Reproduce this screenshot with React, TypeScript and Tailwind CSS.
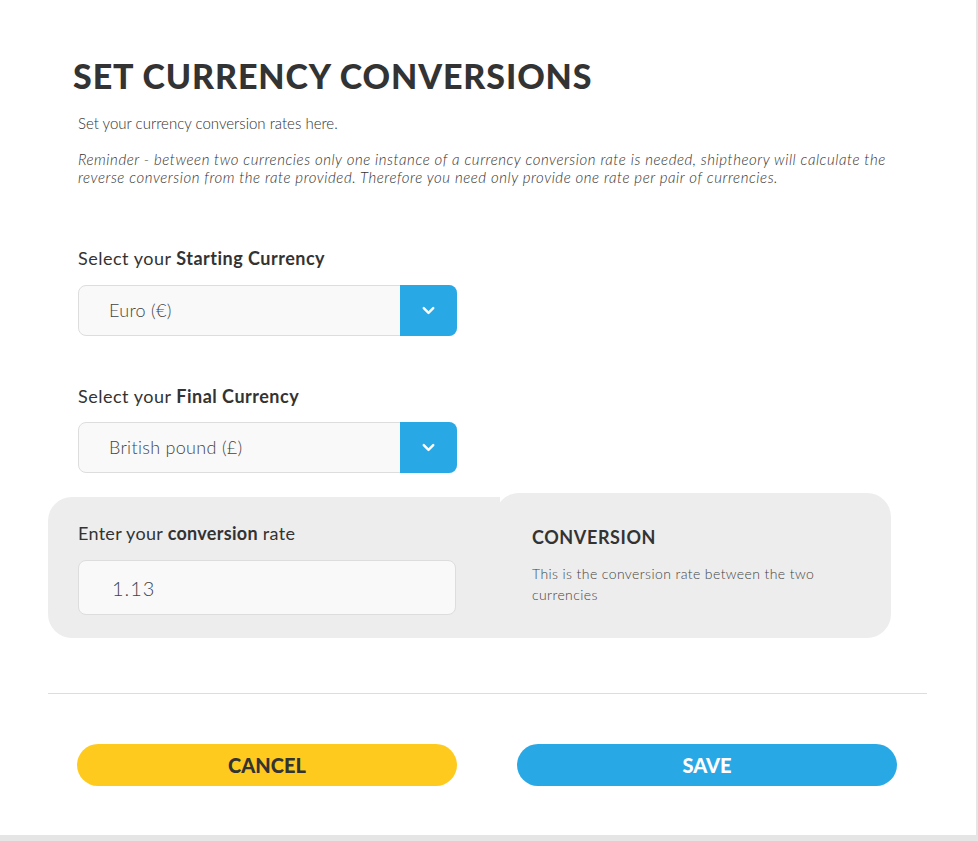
import { ChevronDown } from 'lucide-react';

function Select({ value }: { value: string }) {
  return (
    <div className="flex h-[51px] w-[379px] rounded-[8px] border border-[#dddddd] bg-[#f9f9f9]">
      <div className="flex flex-1 items-center pl-[30px] text-[18px] font-light tracking-[0.3px] text-[#444444]">{value}</div>
      <div className="-my-px -mr-px flex w-[57px] items-center justify-center rounded-r-[8px] bg-[#29a8e6]">
        <ChevronDown size={19} strokeWidth={3} color="#ffffff" />
      </div>
    </div>
  );
}

export default function App() {
  return (
    <div className="min-h-screen bg-[#e5e5e5] font-['Lato',sans-serif] text-[#333333]">
      <div className="h-[835px] w-[976px] bg-white px-[48px] pt-[56px]">
        <h1 className="ml-[25px] text-[34px] leading-[40px] font-black tracking-[0.9px]">SET CURRENCY CONVERSIONS</h1>
        <div className="pl-[30px]">
          <p className="mt-[17px] text-[15px] leading-[20px] font-light text-[#2f2f2f]">Set your currency conversion rates here.</p>
          <p className="mt-[17px] w-[815px] text-[15px] leading-[18px] font-light italic tracking-[0.55px] text-[#333333]">
            Reminder - between two currencies only one instance of a currency conversion rate is needed, shiptheory will calculate the reverse conversion from the rate provided. Therefore you need only provide one rate per pair of currencies.
          </p>

          <p className="mt-[60px] text-[18px] leading-[24px] tracking-[0.5px]">
            Select your <span className="font-bold">Starting Currency</span>
          </p>
          <div className="mt-[15px]">
            <Select value="Euro (€)" />
          </div>

          <p className="mt-[48px] text-[18px] leading-[24px] tracking-[0.5px]">
            Select your <span className="font-bold">Final Currency</span>
          </p>
          <div className="mt-[14px]">
            <Select value="British pound (£)" />
          </div>
        </div>

        <div className="mt-[20px] flex items-end">
          <div className="h-[141px] w-[452px] rounded-l-[24px] bg-[#ededed] px-[30px] pt-[24px]">
            <p className="text-[18px] leading-[24px] tracking-[0.3px]">
              Enter your <span className="font-bold">conversion</span> rate
            </p>
            <div className="mt-[15px] flex h-[55px] w-[378px] items-center rounded-[8px] border border-[#dddddd] bg-[#f9f9f9] pl-[33px] text-[20px] font-light tracking-[1px] text-[#444444]">
              1.13
            </div>
          </div>
          <div className="-ml-[5px] h-[145px] w-[396px] rounded-tl-[24px] rounded-r-[24px] bg-[#ededed] pt-[32px] pl-[37px] pr-[50px]">
            <p className="text-[18px] leading-[24px] font-bold tracking-[0.6px]">CONVERSION</p>
            <p className="mt-[14px] text-[14px] leading-[21px] font-light tracking-[0.4px] text-[#444444]">
              This is the conversion rate between the two currencies
            </p>
          </div>
        </div>

        <div className="mt-[55px] h-px w-[879px] bg-[#dddddd]" />

        <div className="mt-[50px] flex gap-[60px] pl-[29px]">
          <button className="h-[42px] w-[380px] rounded-full bg-[#ffca1e] text-[20px] font-black text-[#333333]">CANCEL</button>
          <button className="h-[42px] w-[380px] rounded-full bg-[#29a8e6] text-[20px] font-black text-white">SAVE</button>
        </div>
      </div>
    </div>
  );
}
